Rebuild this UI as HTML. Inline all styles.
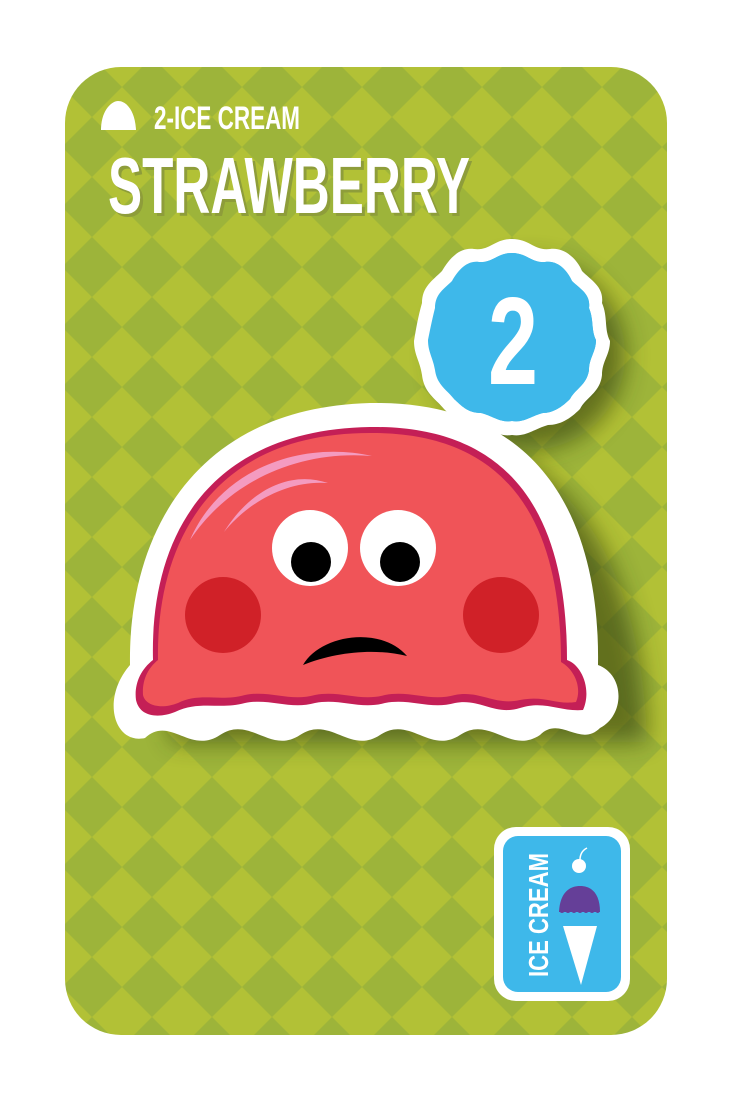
<!DOCTYPE html>
<html><head><meta charset="utf-8"><style>
html,body{margin:0;padding:0;background:#fff;width:733px;height:1102px;overflow:hidden}
svg{display:block}
text{font-family:"Liberation Sans Narrow","Liberation Sans",sans-serif;font-weight:bold}
</style></head><body>
<svg width="733" height="1102" viewBox="0 0 733 1102" xmlns="http://www.w3.org/2000/svg">
<defs>
<pattern id="dia" x="62" y="57" width="60" height="60" patternUnits="userSpaceOnUse">
<rect width="60" height="60" fill="#b2c136"/>
<polygon points="30,0 60,30 30,60 0,30" fill="#9db43a"/>
</pattern>
<clipPath id="card"><rect x="65" y="67" width="602" height="968" rx="56"/></clipPath>
<filter id="sh" x="-20%" y="-20%" width="150%" height="150%"><feGaussianBlur stdDeviation="12"/></filter>
</defs>
<rect x="65" y="67" width="602" height="968" rx="56" fill="url(#dia)"/>
<g clip-path="url(#card)">
<path d="M150 720 C120 560 190 420 370 410 C560 405 620 560 625 720 Z" fill="#2f3a10" opacity="0.6" filter="url(#sh)" transform="translate(22,22)"/>
<circle cx="512" cy="337" r="95" fill="#2f3a10" opacity="0.6" filter="url(#sh)" transform="translate(18,18)"/>
</g>
<!-- header -->
<path d="M101 130 C101 110 112 101 118 101 C126 101 135 110 136 130 Z" fill="#fff"/>
<text x="154" y="129" font-size="32" fill="#fff" textLength="146" lengthAdjust="spacingAndGlyphs">2-ICE CREAM</text>
<text x="111" y="216" font-size="80" fill="#8e9d3a" textLength="362" lengthAdjust="spacingAndGlyphs">STRAWBERRY</text>
<text x="108" y="213" font-size="80" fill="#fff" textLength="362" lengthAdjust="spacingAndGlyphs">STRAWBERRY</text>
<!-- blob white outline -->
<path d="M130 665 C128 540 190 408 370 403 C555 400 600 540 598 665 C625 675 625 715 600 728 C580 748 560 715 540 735 C510 755 490 715 460 735 C430 755 410 715 380 735 C350 755 330 715 300 735 C270 755 250 715 220 735 C190 755 170 715 145 738 C115 745 100 700 130 665 Z" fill="#fff"/>
<path d="M153 660 C150 540 205 430 370 427 C530 425 567 540 567 660 C582 665 592 690 583 710 C560 712 545 700 520 708 C495 716 480 698 455 703 C430 710 410 698 385 703 C360 710 340 698 315 703 C290 710 270 698 245 703 C220 710 200 700 175 712 C160 718 140 718 136 700 C134 685 140 670 153 660 Z" fill="#c41f56"/>
<path d="M158 660 C156 545 210 433 370 433 C525 432 561 545 561 662 C575 670 582 688 576 702 C555 705 545 695 520 700 C495 706 480 690 455 695 C430 702 410 690 385 695 C360 702 340 690 315 695 C290 702 270 690 245 695 C220 702 200 692 178 703 C160 710 145 705 143 695 C142 680 148 668 158 660 Z" fill="#f05458"/>
<path d="M190 540 C220 470 300 440 372 456 C300 450 230 480 190 540 Z" fill="#f49bc0"/>
<path d="M224 532 C250 490 290 470 328 483 C290 480 250 500 224 532 Z" fill="#f49bc0"/>
<circle cx="223" cy="615" r="38" fill="#d02128"/>
<circle cx="501" cy="615" r="38" fill="#d02128"/>
<circle cx="310" cy="548" r="38" fill="#fff"/>
<circle cx="398" cy="548" r="38" fill="#fff"/>
<circle cx="311" cy="562" r="20" fill="#000"/>
<circle cx="400" cy="562" r="20" fill="#000"/>
<path d="M303 665 C320 635 380 625 407 656 C375 648 335 652 303 665 Z" fill="#000"/>
<!-- badge 2 -->
<g transform="translate(512,337)">
<path d="M0 -98 C18 -98 22 -86 38 -88 C54 -90 66 -76 70 -66 C80 -56 92 -50 90 -34 C96 -20 92 -8 98 4 C98 18 90 24 90 38 C88 56 74 60 68 72 C58 82 48 88 36 88 C22 92 14 100 0 98 C-14 100 -22 92 -36 88 C-52 88 -60 80 -68 72 C-76 62 -88 56 -90 38 C-92 24 -98 18 -98 4 C-96 -8 -94 -20 -90 -34 C-90 -50 -80 -56 -70 -66 C-64 -76 -54 -90 -38 -88 C-22 -86 -18 -98 0 -98 Z" fill="#fff"/>
<path d="M0 -84 C15 -84 19 -74 33 -75 C47 -77 56 -65 60 -56 C68 -48 79 -43 77 -29 C82 -17 79 -7 84 3 C84 15 77 21 77 33 C75 48 63 52 58 62 C50 70 41 76 31 76 C19 79 12 86 0 84 C-12 86 -19 79 -31 76 C-45 76 -51 68 -58 62 C-55 -65 -46 -77 -33 -75 C-19 -74 -15 -84 0 -84 Z" fill="#3eb8ea"/>
<path d="M0 -84 C15 -84 19 -74 33 -75 C47 -77 56 -65 60 -56 C68 -48 79 -43 77 -29 C82 -17 79 -7 84 3 C84 15 77 21 77 33 C75 48 63 52 58 62 C50 70 41 76 31 76 C19 79 12 86 0 84 C-12 86 -19 79 -31 76 C-45 76 -51 68 -58 62 C-65 53 -75 48 -77 33 C-79 21 -84 15 -84 3 C-82 -7 -80 -17 -77 -29 C-77 -43 -68 -48 -60 -56 C-55 -65 -46 -77 -33 -75 C-19 -74 -15 -84 0 -84 Z" fill="#3eb8ea"/>
<text x="-24" y="47" font-size="124" fill="#fff" textLength="50" lengthAdjust="spacingAndGlyphs">2</text>
</g>
<!-- ice cream badge -->
<rect x="494" y="827" width="136" height="174" rx="22" fill="#fff"/>
<rect x="503" y="836" width="118" height="156" rx="15" fill="#3eb8ea"/>
<text transform="translate(548,977) rotate(-90)" font-size="28" fill="#fff" textLength="124" lengthAdjust="spacingAndGlyphs">ICE CREAM</text>
<circle cx="579" cy="866" r="7" fill="#fff"/>
<path d="M580 860 C580 854 583 850 587 848" stroke="#fff" stroke-width="1.5" fill="none"/>
<path d="M559 912 C560 892 570 886 580 886 C592 886 600 894 600 912 Z" fill="#653f98"/>
<path d="M559 911 Q562 915 565 911 Q568 915 571 911 Q574 915 577 911 Q580 915 583 911 Q586 915 589 911 Q592 915 595 911 Q598 915 600 911 Z" fill="#653f98"/>
<path d="M563 926 L597 926 L581 985 Z" fill="#fff"/>
</svg>
</body></html>
